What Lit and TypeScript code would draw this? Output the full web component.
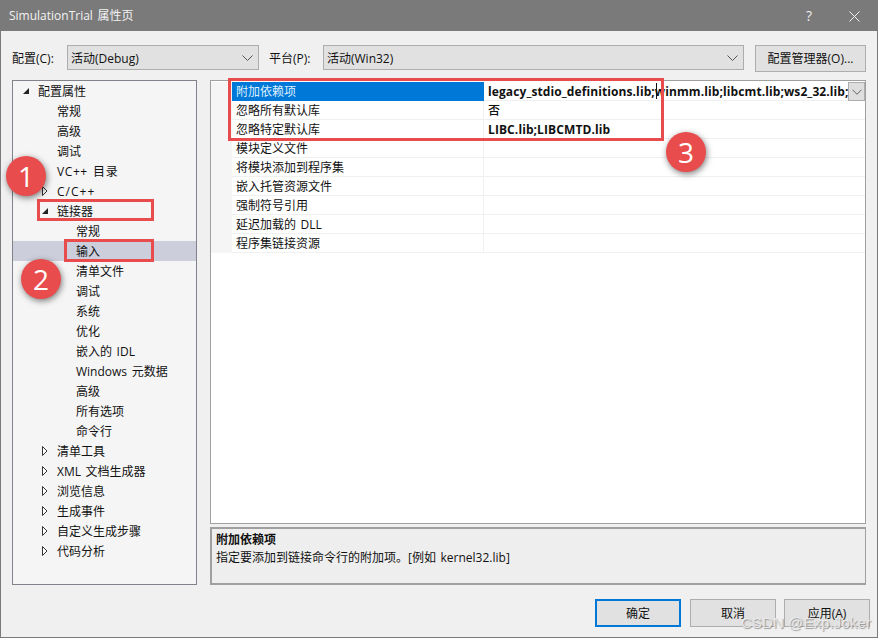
import { LitElement, html, css, nothing } from 'lit';
import { customElement } from 'lit/decorators.js';

type TreeItem = { label: string; level: number; arrow?: 'open' | 'closed'; selected?: boolean; spacing?: number };

const TREE: TreeItem[] = [
  { label: '配置属性', level: 0, arrow: 'open' },
  { label: '常规', level: 1 },
  { label: '高级', level: 1 },
  { label: '调试', level: 1 },
  { label: 'VC++ 目录', level: 1, spacing: 0.6 },
  { label: 'C/C++', level: 1, arrow: 'closed', spacing: 1 },
  { label: '链接器', level: 1, arrow: 'open' },
  { label: '常规', level: 2 },
  { label: '输入', level: 2, selected: true },
  { label: '清单文件', level: 2 },
  { label: '调试', level: 2 },
  { label: '系统', level: 2 },
  { label: '优化', level: 2 },
  { label: '嵌入的 IDL', level: 2 },
  { label: 'Windows 元数据', level: 2 },
  { label: '高级', level: 2 },
  { label: '所有选项', level: 2 },
  { label: '命令行', level: 2 },
  { label: '清单工具', level: 1, arrow: 'closed' },
  { label: 'XML 文档生成器', level: 1, arrow: 'closed' },
  { label: '浏览信息', level: 1, arrow: 'closed' },
  { label: '生成事件', level: 1, arrow: 'closed' },
  { label: '自定义生成步骤', level: 1, arrow: 'closed' },
  { label: '代码分析', level: 1, arrow: 'closed' },
];

const ROWS: [string, string?, string?][] = [
  ['附加依赖项', 'legacy_stdio_definitions.lib;winmm.lib;libcmt.lib;ws2_32.lib;', 'bold'],
  ['忽略所有默认库', '否', 'medium'],
  ['忽略特定默认库', 'LIBC.lib;LIBCMTD.lib', 'bold'],
  ['模块定义文件'],
  ['将模块添加到程序集'],
  ['嵌入托管资源文件'],
  ['强制符号引用'],
  ['延迟加载的 DLL'],
  ['程序集链接资源'],
];

const chevron = html`<svg width="11" height="6" viewBox="0 0 11 6"><path d="M.5.5l5 5 5-5" fill="none" stroke="#555" stroke-width="1"/></svg>`;

@customElement('app-root')
export class AppRoot extends LitElement {
  static styles = css`
    :host {
      display: block;
      width: 878px;
      height: 638px;
      font: 12px/16px 'Open Sans', 'Noto Sans CJK SC', sans-serif;
      word-spacing: 1.5px;
      color: #111;
    }
    .dialog {
      position: relative;
      box-sizing: border-box;
      width: 878px;
      height: 638px;
      border: 1px solid #7a7a7a;
      background: #f0f0f0;
      display: flex;
      flex-direction: column;
      overflow: hidden;
    }
    .title {
      height: 30px;
      flex: none;
      background: #7a7a7a;
      color: #f2f2f2;
      display: flex;
      align-items: center;
      padding-left: 8px;
    }
    .title .name { flex: 1; }
    .help { width: 14px; font-size: 14px; margin-right: 33px; text-align: center; color: #eee; }
    .close { display: flex; margin-right: 17px; }
    .toolbar {
      display: flex;
      align-items: flex-start;
      margin: 14px 0 0 11px;
      height: 27px;
      flex: none;
    }
    .label { height: 25px; line-height: 27px; }
    .label.a { width: 55px; }
    .label.b { width: 54px; margin-left: 10px; }
    .combo {
      box-sizing: border-box;
      height: 25px;
      background: #e1e1e1;
      border: 1px solid #adadad;
      display: flex;
      align-items: center;
      justify-content: space-between;
      padding: 0 5px 0 3px;
    }
    .combo span { padding-top: 2px; }
    .combo.a { width: 192px; }
    .combo.b { width: 421px; }
    .btn {
      box-sizing: border-box;
      background: #e1e1e1;
      border: 1px solid #adadad;
      display: flex;
      align-items: center;
      justify-content: center;
    }
    .btn.mgr { width: 111px; height: 27px; margin-left: 11px; }
    .main {
      display: flex;
      gap: 13px;
      margin: 8px 0 0 11px;
      height: 505px;
      flex: none;
    }
    .tree {
      box-sizing: border-box;
      width: 185px;
      border: 1px solid #82838a;
      background: #f5f5f5;
    }
    .node {
      height: 20px;
      line-height: 22px;
      position: relative;
      white-space: nowrap;
    }
    .node.selected { background: #cccedb; }
    .node svg { position: absolute; top: 5px; }
    .right {
      width: 656px;
      display: flex;
      flex-direction: column;
      gap: 3px;
    }
    .grid {
      box-sizing: border-box;
      height: 444px;
      border: 1px solid #a0a0a0;
      background: #fff;
      padding-top: 1px;
    }
    .row {
      display: flex;
      height: 19px;
      line-height: 20px;
      background: #f5f5f5;
      padding-left: 21px;
    }
    .cell {
      box-sizing: border-box;
      height: 19px;
      background: #fff;
      border-bottom: 1px solid #f0f0f0;
      padding-left: 4px;
      white-space: nowrap;
      overflow: hidden;
    }
    .cell.key { width: 252px; border-right: 1px solid #f0f0f0; }
    .cell.val { width: 381px; position: relative; }
    .row.active .key { background: #0078d7; color: #dff0ff; border-color: #0078d7; }
    .val.bold { font-weight: 700; letter-spacing: 0.1px; }
    .val.medium { font-weight: 500; }
    .val.active-val { width: 364px; }
    .caret { position: absolute; left: 172px; top: 1px; width: 1px; height: 16px; background: #111; }
    .drop {
      box-sizing: border-box;
      width: 17px;
      height: 19px;
      background: #dedede;
      border: 1px solid #adadad;
      display: flex;
      align-items: center;
      justify-content: center;
      flex: none;
    }
    .drop svg { width: 10px; }
    .desc {
      box-sizing: border-box;
      height: 58px;
      border: 1px solid #a0a0a0;
      border-width: 2px 1px 2px 2px;
      background: #eeeeee;
      padding: 2px 4px;
      line-height: 18px;
    }
    .desc b { display: block; }
    .footer {
      display: flex;
      gap: 8px;
      justify-content: flex-end;
      margin-top: 14px;
      padding-right: 7px;
    }
    .footer .btn { width: 86px; height: 28px; padding-top: 2px; }
    .footer .primary { border: 2px solid #0078d7; margin-right: 1px; }
    .mark {
      position: absolute;
      box-sizing: border-box;
      border: 3px solid #e84c4c;
    }
    .badge {
      position: absolute;
      width: 40px;
      height: 40px;
      border-radius: 50%;
      background: #e84c4c;
      color: #fff;
      font: 28px/40px 'Open Sans', sans-serif;
      text-align: center;
      box-shadow: 1px 2px 6px rgba(0, 0, 0, 0.5);
    }
    .watermark {
      position: absolute;
      right: 6px;
      bottom: 4px;
      font: 15px/20px 'Liberation Sans', sans-serif;
      color: rgba(238, 238, 238, 0.85);
      text-shadow: 1px 1px 1px rgba(130, 130, 130, 0.8);
      letter-spacing: 0.1px;
      word-spacing: 0;
    }
  `;

  private arrow(n: TreeItem) {
    const left = n.level === 0 ? 9 : 28;
    if (n.arrow === 'open') {
      return html`<svg style="left:${left}px" width="8" height="10" viewBox="0 0 8 10"><path d="M7 2v6H1z" fill="#222"/></svg>`;
    }
    if (n.arrow === 'closed') {
      return html`<svg style="left:${left}px" width="8" height="10" viewBox="0 0 8 10"><path d="M1.5.5v9l4.5-4.5z" fill="#fff" stroke="#333"/></svg>`;
    }
    return nothing;
  }

  render() {
    return html`
      <div class="dialog">
        <div class="title">
          <span class="name">SimulationTrial 属性页</span>
          <span class="help">?</span>
          <span class="close"><svg width="11" height="11" viewBox="0 0 11 11"><path d="M.5.5l10 10M10.5.5l-10 10" stroke="#f2f2f2" fill="none"/></svg></span>
        </div>
        <div class="toolbar">
          <span class="label a">配置(C):</span>
          <div class="combo a"><span>活动(Debug)</span>${chevron}</div>
          <span class="label b">平台(P):</span>
          <div class="combo b"><span>活动(Win32)</span>${chevron}</div>
          <div class="btn mgr">配置管理器(O)...</div>
        </div>
        <div class="main">
          <div class="tree">
            ${TREE.map(
              (n) => html`<div class="node ${n.selected ? 'selected' : ''}" style="padding-left:${25 + n.level * 19}px;letter-spacing:${n.spacing ?? 0}px">
                ${this.arrow(n)}${n.label}
              </div>`
            )}
          </div>
          <div class="right">
            <div class="grid">
              ${ROWS.map(
                ([key, val, weight], i) => html`<div class="row ${i === 0 ? 'active' : ''}">
                  <div class="cell key">${key}</div>
                  <div class="cell val ${weight ?? ''} ${i === 0 ? 'active-val' : ''}">
                    ${val ?? ''}${i === 0 ? html`<span class="caret"></span>` : nothing}
                  </div>
                  ${i === 0 ? html`<div class="drop">${chevron}</div>` : nothing}
                </div>`
              )}
            </div>
            <div class="desc">
              <b>附加依赖项</b>
              指定要添加到链接命令行的附加项。[例如 kernel32.lib]
            </div>
          </div>
        </div>
        <div class="footer">
          <div class="btn primary">确定</div>
          <div class="btn">取消</div>
          <div class="btn">应用(A)</div>
        </div>

        <div class="mark" style="left:227px;top:77px;width:436px;height:63px"></div>
        <div class="mark" style="left:36px;top:198px;width:117px;height:22px"></div>
        <div class="mark" style="left:63px;top:238px;width:90px;height:23px"></div>
        <div class="badge" style="left:5px;top:155px">1</div>
        <div class="badge" style="left:20px;top:258px">2</div>
        <div class="badge" style="left:665px;top:131px">3</div>
        <div class="watermark">CSDN @Exp.Joker</div>
      </div>
    `;
  }
}
